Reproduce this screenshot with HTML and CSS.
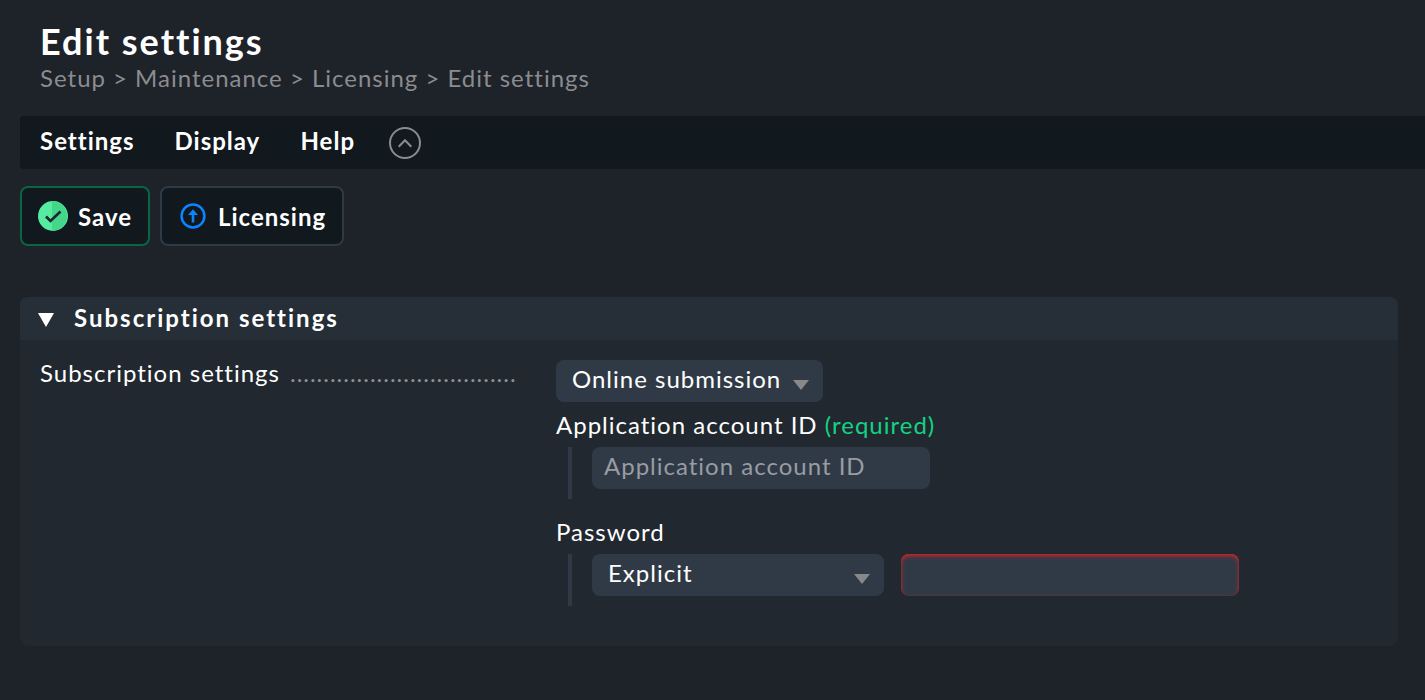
FILE: index.html
```html
<!DOCTYPE html>
<html lang="en">
<head>
<meta charset="utf-8">
<title>Edit settings</title>
<link rel="stylesheet" href="styles.css">
</head>
<body>
<header class="page-header">
  <h1 class="title">Edit settings</h1>
  <nav class="breadcrumb"><span>Setup</span><span class="sep">&gt;</span><span>Maintenance</span><span class="sep">&gt;</span><span>Licensing</span><span class="sep">&gt;</span><span>Edit settings</span></nav>
</header>
<nav class="menubar">
  <span class="menu menu-settings">Settings</span>
  <span class="menu menu-display">Display</span>
  <span class="menu menu-help">Help</span>
  <svg class="toggle" width="32" height="32" viewBox="0 0 32 32" fill="none" stroke="#8c8c8c" stroke-width="2"><circle cx="16" cy="16" r="15"/><path d="M9.700 19.700 16 13.200l6.300 6.500"/></svg>
</nav>
<div class="actions">
  <button class="action save">
    <svg width="30" height="30" viewBox="0 0 30 30"><circle cx="15" cy="15" r="15" fill="#55eba0"/><path d="M14 0a15 15 0 0 1 0 30z" fill="#44d68a"/><path d="M8 15.500 12.500 20 22.500 10.500" fill="none" stroke="#1e262e" stroke-width="2.600"/></svg>
    <span>Save</span>
  </button>
  <button class="action licensing">
    <svg width="26" height="26" viewBox="0 0 26 26"><circle cx="13" cy="13" r="11.400" fill="none" stroke="#0a84ff" stroke-width="2.500"/><path d="M13 6.200 18 12h-3.700v7.500h-2.600V12H8z" fill="#0a84ff"/></svg>
    <span>Licensing</span>
  </button>
</div>
<section class="panel">
  <h2 class="panel-head"><svg width="16" height="14" viewBox="0 0 16 14"><path d="M0 0h16L8 14z" fill="#fff"/></svg><span>Subscription settings</span></h2>
  <div class="panel-body">
    <div class="legend"><span>Subscription settings</span><span class="dots">..................................</span></div>
    <div class="fields">
      <div class="control select online"><span>Online submission</span><svg width="16" height="10" viewBox="0 0 16 10"><path d="M0 0h16L8 10z" fill="#888"/></svg></div>
      <div class="label">Application account ID <span class="required">(required)</span></div>
      <div class="indent first"><input class="control input" placeholder="Application account ID"></div>
      <div class="label">Password</div>
      <div class="indent"><div class="control select explicit"><span>Explicit</span><svg width="16" height="10" viewBox="0 0 16 10"><path d="M0 0h16L8 10z" fill="#888"/></svg></div><input class="control input invalid" type="password"></div>
    </div>
  </div>
</section>
</body>
</html>
```
FILE: styles.css
```css
* { box-sizing: border-box; }
body {
  margin: 0;
  height: 700px;
  overflow: hidden;
  background: #1e2229;
  color: #fff;
  font: 24px/30px Lato, sans-serif;
  letter-spacing: 1px;
  white-space: nowrap;
}
.page-header { height: 116px; padding: 19px 0 0 40px; }
.title { margin: 0; font-size: 36px; line-height: 44px; letter-spacing: 2px; font-weight: 700; }
.breadcrumb { display: flex; color: #8b8c8f; }
.sep { margin: 0 7.100px; }
.menubar {
  display: flex;
  height: 53px;
  margin-left: 20px;
  padding: 10px 0 0 20px;
  background: #11181e;
  border-radius: 4px 0 0 4px;
  font-weight: 700;
}
.menu-settings { width: 134.500px; }
.menu-display { width: 126px; }
.menu-help { width: 88.500px; }
.toggle { margin-top: 1px; }
.actions { display: flex; gap: 10px; margin: 17px 0 0 20px; }
.action {
  display: flex;
  align-items: center;
  height: 60px;
  padding: 0 0 0 16px;
  border: 2px solid #2f3a47;
  border-radius: 8px;
  background: #11181e;
  color: #fff;
  font: 700 24px/30px Lato, sans-serif;
  letter-spacing: 1px;
}
.action span { padding-top: 2px; }
.save { width: 130px; gap: 10px; border-color: #0a6640; }
.licensing { width: 184px; padding-left: 18px; gap: 12px; }
.panel {
  width: 1378px;
  height: 349px;
  margin: 51px 0 0 20px;
  overflow: hidden;
  border-radius: 8px;
  background: #21282f;
}
.panel-head {
  display: flex;
  align-items: center;
  height: 43px;
  margin: 0;
  padding-left: 18px;
  gap: 20px;
  background: #262f37;
  font-size: 24px;
  line-height: 30px;
  letter-spacing: 2px;
}
.panel-head svg { margin-top: 3px; }
.panel-head span { padding-bottom: 2px; }
.panel-body { display: flex; padding: 20px; }
.legend { display: flex; width: 516px; gap: 10px; margin-top: -2px; }
.dots { color: #8f9094; }
.fields { display: flex; flex-direction: column; align-items: flex-start; }
.control {
  height: 42px;
  border: 0;
  border-radius: 8px;
  background: #303a46;
  color: #fff;
}
.select { display: flex; justify-content: space-between; padding: 4px 14px 0 16px; }
.select svg { margin-top: 16px; }
.online { width: 267px; }
.explicit { width: 292px; }
.label { height: 45px; padding-top: 8px; }
.required { color: #15d184; }
.indent { display: flex; gap: 17px; height: 52px; margin-left: 12px; padding-left: 20px; border-left: 4px solid #2f3a46; }
.first { margin-bottom: 10px; }
.input {
  width: 338px;
  padding: 0 12px 5px;
  font: 24px/30px Lato, sans-serif;
  letter-spacing: 1px;
}
.input::placeholder { color: #989ca3; opacity: 1; }
.invalid { box-shadow: inset 0 2px 4px #b8282d, inset 0 1px 2px #b8282d; }
```
